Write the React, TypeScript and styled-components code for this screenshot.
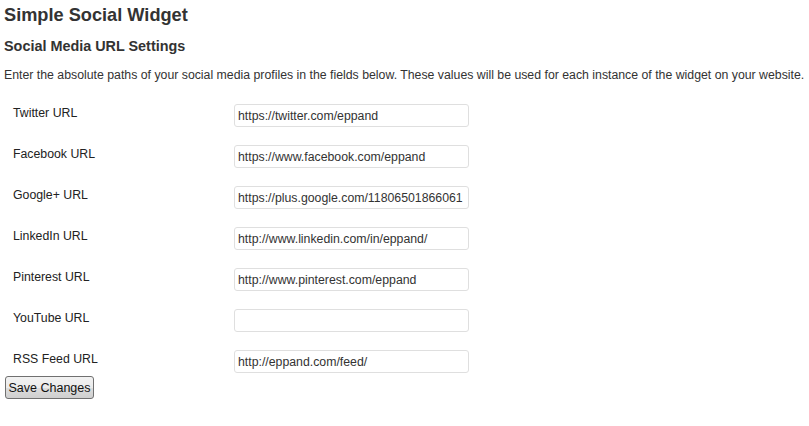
import React from 'react';
import styled, { createGlobalStyle } from 'styled-components';

const GlobalStyle = createGlobalStyle`
  html, body {
    margin: 0;
    padding: 0;
    background: #fff;
  }
  body {
    font-family: 'Liberation Sans', Arial, sans-serif;
    color: #333;
  }
`;

const Wrap = styled.div`
  width: 809px;
  height: 426px;
  padding: 0 0 0 4px;
  box-sizing: border-box;
`;

const Title = styled.h2`
  margin: 0;
  padding-top: 4px;
  font-size: 18.2px;
  line-height: 22px;
  font-weight: bold;
  color: #333;
`;

const SubTitle = styled.h3`
  margin: 12px 0 0;
  font-size: 14.4px;
  line-height: 17px;
  font-weight: bold;
  color: #333;
`;

const Intro = styled.p`
  margin: 12px 0 0;
  font-size: 12.3px;
  line-height: 16px;
  color: #333;
  white-space: nowrap;
`;

const Fields = styled.div`
  display: flex;
  flex-direction: column;
  gap: 18px;
  margin-top: 21px;
`;

const Row = styled.div`
  display: flex;
  align-items: flex-start;
  height: 23px;
`;

const Label = styled.label`
  width: 230px;
  padding: 1px 0 0 9px;
  box-sizing: border-box;
  font-size: 12.3px;
  line-height: 16px;
  color: #222;
`;

const UrlInput = styled.input`
  width: 235px;
  height: 23px;
  box-sizing: border-box;
  margin: 0;
  padding: 0 3px;
  border: 1px solid #dfdfdf;
  border-radius: 3px;
  background: #fff;
  font-family: 'Liberation Sans', Arial, sans-serif;
  font-size: 12.3px;
  color: #333;
  outline: none;
`;

const SaveButton = styled.button`
  margin: 3px 0 0 1px;
  width: 89px;
  height: 23px;
  padding: 0;
  border: 1px solid #707070;
  border-radius: 3px;
  background: linear-gradient(#f2f2f2, #ebebeb 50%, #dddddd 51%, #cfcfcf);
  font-family: 'Liberation Sans', Arial, sans-serif;
  font-size: 12.5px;
  color: #111;
  cursor: pointer;
`;

const fields = [
  { label: 'Twitter URL', value: 'https://twitter.com/eppand' },
  { label: 'Facebook URL', value: 'https://www.facebook.com/eppand' },
  { label: 'Google+ URL', value: 'https://plus.google.com/11806501866061' },
  { label: 'LinkedIn URL', value: 'http://www.linkedin.com/in/eppand/' },
  { label: 'Pinterest URL', value: 'http://www.pinterest.com/eppand' },
  { label: 'YouTube URL', value: '' },
  { label: 'RSS Feed URL', value: 'http://eppand.com/feed/' },
];

const App = () => (
  <Wrap>
    <GlobalStyle />
    <Title>Simple Social Widget</Title>
    <SubTitle>Social Media URL Settings</SubTitle>
    <Intro>
      Enter the absolute paths of your social media profiles in the fields below. These values will be
      used for each instance of the widget on your website.
    </Intro>
    <Fields>
      {fields.map((f) => (
        <Row key={f.label}>
          <Label>{f.label}</Label>
          <UrlInput type="text" defaultValue={f.value} />
        </Row>
      ))}
    </Fields>
    <SaveButton onClick={(): void => console.log('saved')}>Save Changes</SaveButton>
  </Wrap>
);

export default App;
